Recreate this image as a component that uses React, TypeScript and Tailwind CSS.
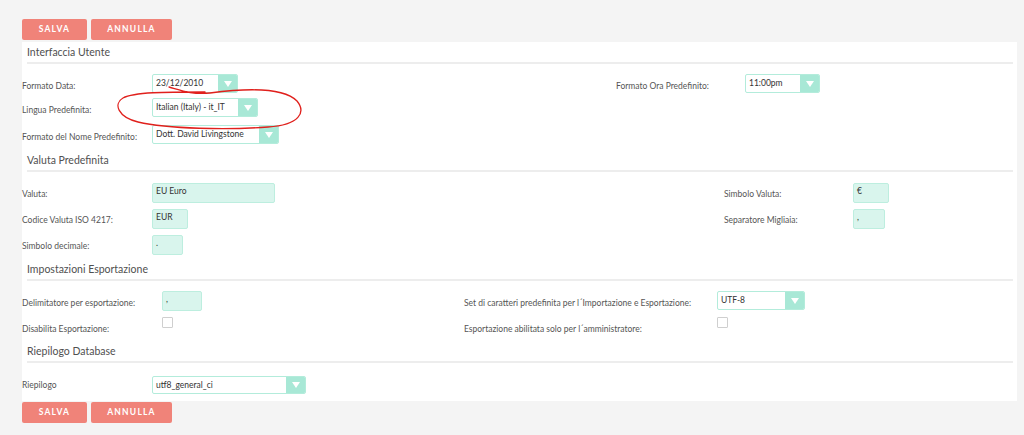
import React from 'react';

const font = { fontFamily: 'Lato, "Open Sans", sans-serif' };

function Buttons() {
  return (
    <div className="flex gap-[4px] h-[21px]">
      <button className="w-[65px] h-[21px] rounded-[2px] bg-[#f08379] text-white text-[8.5px] font-bold tracking-[1.2px]">
        SALVA
      </button>
      <button className="w-[81px] h-[21px] rounded-[2px] bg-[#f08379] text-white text-[8.5px] font-bold tracking-[1.2px]">
        ANNULLA
      </button>
    </div>
  );
}

function Header({ title }: { title: string }) {
  return (
    <div>
      <div className="h-[20px] pl-[5px] text-[10.5px] leading-[20px] text-[#505050]">{title}</div>
      <div className="ml-[5px] mr-[4px] h-[2px] bg-[#ededed]" />
    </div>
  );
}

function Select({ value, w, h = 19 }: { value: string; w: number; h?: number }) {
  return (
    <div
      className="flex border border-[#b3ecdb] rounded-[2px] bg-white overflow-hidden"
      style={{ width: w, height: h }}
    >
      <div className="flex-1 pl-[3px] text-[8.5px] leading-[16px] text-[#333]">{value}</div>
      <div className="w-[19px] bg-[#a8e8d6] flex items-center justify-center">
        <div className="w-0 h-0 border-l-[4.5px] border-r-[4.5px] border-t-[6px] border-l-transparent border-r-transparent border-t-white" />
      </div>
    </div>
  );
}

function Input({ value, w }: { value: string; w: number }) {
  return (
    <div
      className="h-[20px] border border-[#bdeedf] rounded-[2px] bg-[#d9f5ed] pl-[3px] text-[8.5px] leading-[15px] text-[#333]"
      style={{ width: w }}
    >
      {value}
    </div>
  );
}

function Check() {
  return <div className="w-[11px] h-[11px] border border-[#cfcfcf] rounded-[1px] bg-white" />;
}

function Label({ children, pt = 5 }: { children: React.ReactNode; pt?: number }) {
  return (
    <div className="text-[8.5px] leading-[14px] text-[#555] whitespace-nowrap" style={{ paddingTop: pt }}>
      {children}
    </div>
  );
}

export default function App() {
  return (
    <div className="relative w-[1024px] h-[435px] bg-[#f4f4f4] pl-[22px] pt-[19px]" style={font}>
      <Buttons />

      <div className="mt-[2px] w-[995px] h-[359px] bg-white">
        <Header title="Interfaccia Utente" />
        <div className="pt-[10px]">
          <div className="grid grid-cols-[130px_464px_129px_1fr] h-[24px]">
            <Label>Formato Data:</Label>
            <Select value="23/12/2010" w={86} />
            <Label>Formato Ora Predefinito:</Label>
            <Select value="11:00pm" w={75} />
          </div>
          <div className="grid grid-cols-[130px_1fr] h-[27px]">
            <Label>Lingua Predefinita:</Label>
            <Select value="Italian (Italy) - it_IT" w={106} />
          </div>
          <div className="grid grid-cols-[130px_1fr] h-[25px]">
            <Label>Formato del Nome Predefinito:</Label>
            <Select value="Dott. David Livingstone" w={127} />
          </div>
        </div>

        <Header title="Valuta Predefinita" />
        <div className="pt-[11px]">
          <div className="grid grid-cols-[130px_572px_129px_1fr] h-[26px]">
            <Label pt={4}>Valuta:</Label>
            <Input value="EU Euro" w={123} />
            <Label pt={4}>Simbolo Valuta:</Label>
            <Input value="€" w={36} />
          </div>
          <div className="grid grid-cols-[130px_572px_129px_1fr] h-[26px]">
            <Label pt={4}>Codice Valuta ISO 4217:</Label>
            <Input value="EUR" w={36} />
            <Label pt={4}>Separatore Migliaia:</Label>
            <Input value="," w={32} />
          </div>
          <div className="grid grid-cols-[130px_1fr] h-[24px]">
            <Label pt={4}>Simbolo decimale:</Label>
            <Input value="." w={31} />
          </div>
        </div>

        <Header title="Impostazioni Esportazione" />
        <div className="pt-[10px]">
          <div className="grid grid-cols-[140px_302px_253px_1fr] h-[26px]">
            <Label>Delimitatore per esportazione:</Label>
            <Input value="," w={40} />
            <Label>Set di caratteri predefinita per l´Importazione e Esportazione:</Label>
            <Select value="UTF-8" w={88} />
          </div>
          <div className="grid grid-cols-[140px_302px_253px_1fr] h-[24px]">
            <Label pt={5}>Disabilita Esportazione:</Label>
            <Check />
            <Label pt={5}>Esportazione abilitata solo per l´amministratore:</Label>
            <Check />
          </div>
        </div>

        <Header title="Riepilogo Database" />
        <div className="pt-[13px]">
          <div className="grid grid-cols-[130px_1fr] h-[23px]">
            <Label pt={2}>Riepilogo</Label>
            <Select value="utf8_general_ci" w={154} h={18} />
          </div>
        </div>
      </div>

      <div className="mt-[1px]">
        <Buttons />
      </div>

      {/* hand-drawn annotation */}
      <svg className="absolute left-0 top-0 pointer-events-none" width="1024" height="435">
        <path
          d="M169,87 C180,90 192,95 210,93 C240,89 282,86 297,101 C306,112 300,125 268,127 C228,130 168,129 138,122 C118,117 113,104 123,98 C134,92 165,92 205,92"
          fill="none"
          stroke="#e0201c"
          strokeWidth="1.3"
          strokeLinecap="round"
        />
      </svg>
    </div>
  );
}
